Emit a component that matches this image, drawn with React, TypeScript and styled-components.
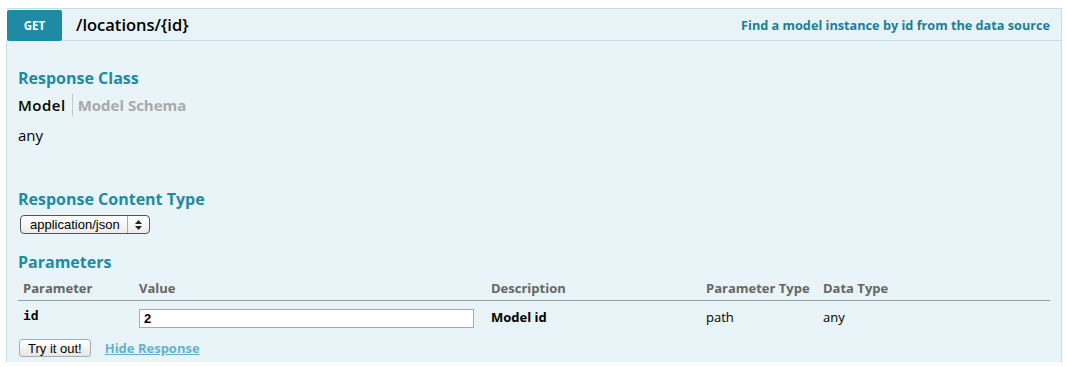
import React from "react";
import styled, { createGlobalStyle } from "styled-components";

const GlobalStyle = createGlobalStyle`
    body {
        margin: 0;
        background: #ffffff;
        font-family: "Open Sans", "DejaVu Sans", sans-serif;
    }
`;

const Page = styled.div`
    padding: 8px 5px 0 6px;
`;

const Operation = styled.div`
    display: flex;
    flex-direction: column;
`;

const Heading = styled.div`
    display: flex;
    align-items: center;
    height: 31px;
    background-color: #e7f3f6;
    border: 1px solid #c0dfe7;
    border-left: none;
    margin-left: 1px;
`;

const MethodBadge = styled.span`
    display: flex;
    align-items: center;
    justify-content: center;
    width: 55px;
    height: 31px;
    margin-top: 1px;
    align-self: flex-start;
    background-color: #1e8aa3;
    color: #ffffff;
    font-size: 11.5px;
    font-weight: 700;
    border-radius: 2px;
`;

const Path = styled.span`
    margin-left: 14px;
    font-size: 16.5px;
    font-weight: 600;
    color: #000000;
    flex: 1;
`;

const Summary = styled.span`
    margin-right: 11px;
    font-size: 12.7px;
    font-weight: 700;
    color: #1f7d95;
`;

const Content = styled.div`
    background-color: #e8f4f7;
    border: 1px solid #c0dfe7;
    border-top: none;
    border-bottom: none;
    padding: 26px 11px 10px 11px;
    height: 285px;
`;

const SectionTitle = styled.h4`
    margin: 0;
    font-size: 16px;
    font-weight: 700;
    color: #1f8aa2;
    line-height: 22px;
`;

const Tabs = styled.div`
    display: flex;
    align-items: center;
    margin-top: 5px;
    height: 22px;
`;

const Tab = styled.span<{ $active?: boolean }>`
    font-size: 15px;
    font-weight: ${(p) => (p.$active ? 600 : 700)};
    color: ${(p) => (p.$active ? "#000000" : "#aaaaaa")};
    padding-right: 6px;
    line-height: 22px;
    ${(p) => p.$active && "letter-spacing: 0.5px;"}
    & + & {
        border-left: 1px solid #c8c8c8;
        padding-left: 5px;
    }
`;

const PlainValue = styled.div`
    font-size: 15px;
    color: #000000;
    margin-top: 9px;
    margin-bottom: 43px;
`;

const SelectBox = styled.div`
    display: inline-flex;
    align-items: center;
    margin: 5px 0 0 2px;
    height: 17px;
    border: 1px solid #555555;
    border-radius: 4px;
    background: linear-gradient(#ffffff, #ececec);
    font-size: 13px;
    color: #000000;
    font-family: "Liberation Sans", sans-serif;
`;

const SelectLabel = styled.span`
    padding: 0 7px 0 9px;
`;

const SelectArrow = styled.span`
    display: flex;
    align-items: center;
    justify-content: center;
    width: 21px;
    height: 100%;
    border-left: 1px solid #aaaaaa;
`;

const ParamsBlock = styled.div`
    margin-top: 17px;
`;

const ParamTable = styled.table`
    width: 1032px;
    border-collapse: collapse;
    margin-top: 4px;
    table-layout: fixed;
`;

const HeadCell = styled.th<{ $w: number }>`
    width: ${(p) => p.$w}px;
    text-align: left;
    font-size: 13px;
    font-weight: 700;
    color: #666666;
    padding: 2px 0 3px 5px;
    border-bottom: 1px solid #999999;
`;

const Cell = styled.td<{ $bold?: boolean; $mono?: boolean }>`
    font-size: 13px;
    font-weight: ${(p) => (p.$bold ? 700 : 400)};
    font-family: ${(p) => (p.$mono ? '"DejaVu Sans Mono", monospace' : "inherit")};
    color: #000000;
    padding: 7px 0 2px 5px;
    vertical-align: top;
`;

const ValueInput = styled.input`
    box-sizing: border-box;
    width: 335px;
    height: 19px;
    margin: 1px 0 0 0;
    border: 1px solid #aaaaaa;
    padding: 0 4px;
    font-size: 13px;
    font-family: "Liberation Sans", sans-serif;
    font-weight: 700;
`;

const Actions = styled.div`
    display: flex;
    align-items: center;
    gap: 14px;
    margin-top: 9px;
    margin-left: 1px;
`;

const TryButton = styled.button`
    height: 18px;
    padding: 0 8px;
    border: 1px solid #aaaaaa;
    border-radius: 3px;
    background: linear-gradient(#ffffff, #e6e6e6);
    font-family: "Liberation Sans", sans-serif;
    font-size: 13px;
    color: #000000;
`;

const HideLink = styled.a`
    font-size: 13px;
    font-weight: 700;
    color: #62b3c8;
    text-decoration: underline;
`;

const App: React.FC = () => {
    return (
        <Page>
            <GlobalStyle />
            <Operation>
                <Heading>
                    <MethodBadge>GET</MethodBadge>
                    <Path>/locations/&#123;id&#125;</Path>
                    <Summary>Find a model instance by id from the data source</Summary>
                </Heading>
                <Content>
                    <SectionTitle>Response Class</SectionTitle>
                    <Tabs>
                        <Tab $active>Model</Tab>
                        <Tab>Model Schema</Tab>
                    </Tabs>
                    <PlainValue>any</PlainValue>

                    <SectionTitle>Response Content Type</SectionTitle>
                    <SelectBox>
                        <SelectLabel>application/json</SelectLabel>
                        <SelectArrow>
                            <svg width="7" height="10" viewBox="0 0 7 10">
                                <path d="M3.5 0 L7 4 H0 Z M3.5 10 L0 6 H7 Z" fill="#222" />
                            </svg>
                        </SelectArrow>
                    </SelectBox>

                    <ParamsBlock>
                        <SectionTitle>Parameters</SectionTitle>
                        <ParamTable>
                            <thead>
                                <tr>
                                    <HeadCell $w={111}>Parameter</HeadCell>
                                    <HeadCell $w={347}>Value</HeadCell>
                                    <HeadCell $w={210}>Description</HeadCell>
                                    <HeadCell $w={112}>Parameter Type</HeadCell>
                                    <HeadCell $w={227}>Data Type</HeadCell>
                                </tr>
                            </thead>
                            <tbody>
                                <tr>
                                    <Cell $bold $mono>id</Cell>
                                    <Cell>
                                        <ValueInput defaultValue="2" />
                                    </Cell>
                                    <Cell $bold>Model id</Cell>
                                    <Cell>path</Cell>
                                    <Cell>any</Cell>
                                </tr>
                            </tbody>
                        </ParamTable>
                        <Actions>
                            <TryButton>Try it out!</TryButton>
                            <HideLink href="#">Hide Response</HideLink>
                        </Actions>
                    </ParamsBlock>
                </Content>
            </Operation>
        </Page>
    );
};

export default App;
